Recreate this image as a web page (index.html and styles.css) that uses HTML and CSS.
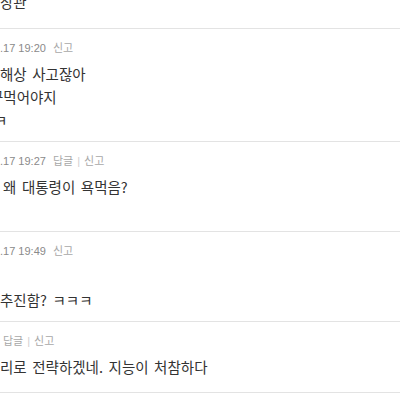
FILE: index.html
```html
<!DOCTYPE html>
<html lang="ko">
<head>
  <meta charset="UTF-8">
  <title>댓글</title>
  <link rel="stylesheet" href="styles.css">
</head>
<body>

  <ul class="comment-list">
    <li class="comment first">
      <div class="comment-text">
        <p class="line">장관</p>
      </div>
    </li>

    <li class="comment">
      <div class="comment-info">
        <span class="date">.17 19:20</span>
        <a class="act">신고</a>
      </div>
      <div class="comment-text">
        <p class="line">해상 사고잖아</p>
        <p class="line cut">꾸먹어야지</p>
        <p class="line cut-small">ㅋ</p>
      </div>
    </li>

    <li class="comment">
      <div class="comment-info">
        <span class="date">.17 19:27</span>
        <a class="act">답글</a><span class="bar">|</span><a class="act">신고</a>
      </div>
      <div class="comment-text">
        <p class="line indent">왜 대통령이 욕먹음?</p>
        <p class="line"></p>
      </div>
    </li>

    <li class="comment">
      <div class="comment-info">
        <span class="date">.17 19:49</span>
        <a class="act">신고</a>
      </div>
      <div class="comment-text">
        <p class="line"></p>
        <p class="line">추진함? ㅋㅋㅋ</p>
      </div>
    </li>

    <li class="comment last">
      <div class="comment-info indent">
        <a class="act">답글</a><span class="bar">|</span><a class="act">신고</a>
      </div>
      <div class="comment-text">
        <p class="line">리로 전략하겠네. 지능이 처참하다</p>
      </div>
    </li>
  </ul>

</body>
</html>
```

FILE: styles.css
```css
body {
  margin: 0;
  background: #fff;
  font-family: "Liberation Sans", "Noto Sans CJK KR", sans-serif;
  color: #333;
  overflow: hidden;
}

.comment-list {
  list-style: none;
  margin: 0;
  padding: 0;
}

.comment {
  padding: 11px 0 10px;
  border-bottom: 1px solid #e3e3e3;
}

.comment.first {
  margin-top: -10px;
  padding-top: 0;
  padding-bottom: 15px;
}

.comment.last {
  padding-bottom: 14px;
}

.comment-info {
  height: 16px;
  line-height: 16px;
  margin-bottom: 6px;
  font-size: 11px;
  white-space: nowrap;
}

.comment-info .date {
  color: #8a8a8a;
  margin-right: 4px;
}

.comment-info .act {
  color: #a8a8a8;
}

.comment-info .bar {
  color: #d0d0d0;
  margin: 0 4px;
}

.comment-text {
  font-family: "Noto Sans CJK KR", sans-serif;
  font-size: 14.5px;
  word-spacing: 1.5px;
  white-space: nowrap;
}

.line {
  margin: 0;
  height: 23px;
  line-height: 23px;
}

.indent {
  padding-left: 3px;
}

.cut {
  margin-left: -10px;
}

.cut-small {
  margin-left: -6px;
}
```
